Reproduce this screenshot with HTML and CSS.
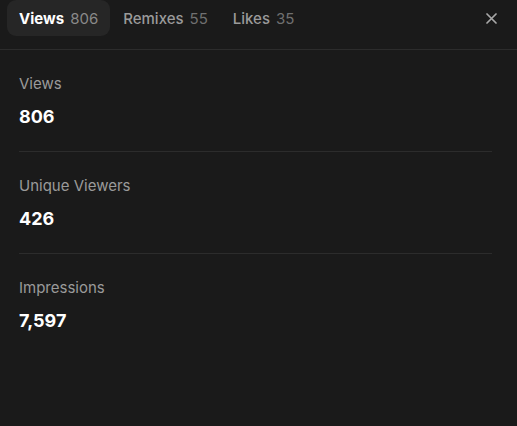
FILE: index.html
```html
<!DOCTYPE html>
<html lang="en">
<head>
    <meta charset="UTF-8">
    <title>Views</title>
    <link rel="stylesheet" href="styles.css">
</head>
<body>
<div class="panel">
    <div class="hd">
        <ul class="tabs">
            <li class="tab active"><b>Views</b><span>806</span></li>
            <li class="tab"><b>Remixes</b><span>55</span></li>
            <li class="tab"><b>Likes</b><span>35</span></li>
        </ul>
        <button class="close" aria-label="Close">
            <svg width="11" height="11" viewBox="0 0 11 11"><path d="M1 1l9 9M10 1l-9 9" stroke="currentColor" stroke-width="1.7" stroke-linecap="round"/></svg>
        </button>
    </div>
    <div class="bd">
        <div class="stat">
            <p class="label">Views</p>
            <p class="value">806</p>
        </div>
        <div class="stat">
            <p class="label">Unique Viewers</p>
            <p class="value">426</p>
        </div>
        <div class="stat last">
            <p class="label">Impressions</p>
            <p class="value">7,597</p>
        </div>
    </div>
</div>
</body>
</html>
```

FILE: styles.css
```css
html,body{margin:0;height:100%;background:#1a1a1a;}
body{font-family:Inter,"Noto Sans",sans-serif;color:#fff;}
.panel{height:100%;}

/* header: tabs + close */
.hd{
    display:flex;
    justify-content:space-between;
    align-items:flex-start;
    height:49px;
    border-bottom:1px solid #2c2c2c;
    padding:0 15px 0 7px;
}
.tabs{display:flex;gap:1px;margin:0;padding:0;list-style:none;}
.tab{
    display:flex;
    align-items:center;
    gap:6px;
    height:36px;
    padding:0 12px;
    border-radius:9px;
    font-size:15px;
}
.tab b{font-weight:500;color:#9a9a9a;}
.tab span{color:#707070;}
.tab.active{background:#262626;}
.tab.active b{font-weight:700;color:#fff;}
.tab.active span{color:#8a8a8a;}

.close{
    display:flex;
    align-items:center;
    justify-content:center;
    width:22px;
    height:36px;
    padding:0;
    border:0;
    background:none;
    color:#a8a8a8;
}

/* stats list */
.bd{padding:0 25px 0 19px;}
.stat{padding:24px 0 22px;border-bottom:1px solid #2c2c2c;}
.stat.last{border-bottom:0;}
.stat p{margin:0;}
.label{font-size:15px;line-height:20px;color:#9a9a9a;}
.value{margin-top:11px!important;font-size:18px;line-height:24px;font-weight:700;color:#fff;}
```
